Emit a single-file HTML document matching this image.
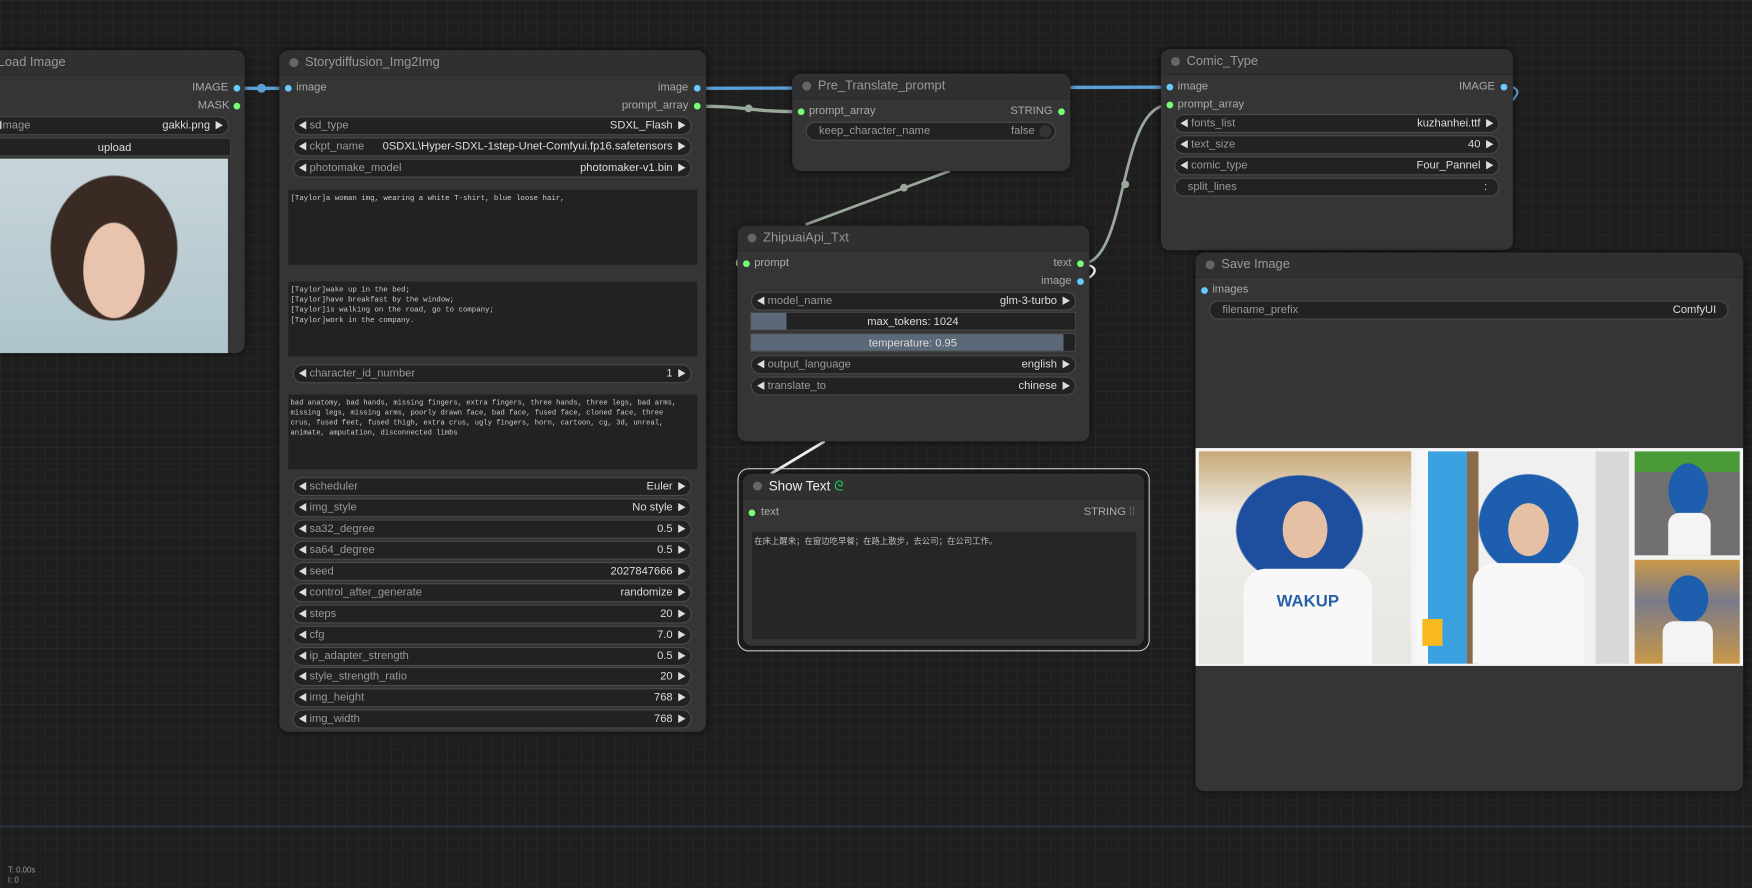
<!DOCTYPE html>
<html><head><meta charset="utf-8"><style>
html,body{margin:0;padding:0;width:1752px;height:888px;overflow:hidden;background:#1e1e1e}
#c{position:absolute;left:0;top:0;width:1568px;height:795px;transform:scale(1.11735);transform-origin:0 0;overflow:hidden;
background-color:#1e1e1e;
background-image:linear-gradient(#262626 1px,transparent 1px),linear-gradient(90deg,#262626 1px,transparent 1px);
background-size:10px 10px;font-family:"Liberation Sans","Noto Sans CJK SC",sans-serif;font-size:10px;color:#aaa}
.n{position:absolute;background:#353535;border-radius:8px;box-shadow:0 0 6px rgba(0,0,0,.6)}
.t{position:absolute;left:0;right:0;top:0;height:22px;background:#303030;border-radius:8px 8px 0 0;border-bottom:1px solid #2a2a2a;color:#999;font-size:11.5px;line-height:22px;padding-left:23px}
.t:before{content:"";position:absolute;left:9px;top:7px;width:8px;height:8px;border-radius:50%;background:#666}
.t.nd:before{display:none}
.a{position:absolute;font-size:10px;color:#aaa;line-height:12px}
.d{position:absolute;width:6px;height:6px;border-radius:50%}
.g{background:#7f7}.b{background:#6cf}
.w{position:absolute;height:15px;border-radius:9px;background:#222;border:1px solid #4a4a4a;line-height:15px;font-size:10px;color:#999}
.w .l{position:absolute;left:14px}.w .v{position:absolute;right:16px;color:#ddd}
.w:before{content:"◀";position:absolute;left:4px;font-size:8px;color:#ddd}
.w:after{content:"▶";position:absolute;right:4px;font-size:8px;color:#ddd}
.w.nb:before,.w.nb:after{content:""}
.w.nb .l{left:11px}.w.nb .v{right:10px}
.ta{position:absolute;background:#222;font-family:"Liberation Mono",monospace;font-size:6.6px;line-height:9px;color:#ccc;padding:3px 2px;box-sizing:border-box;white-space:pre;overflow:hidden}
.s{position:absolute;height:17px;background:#222;border:1px solid #444;color:#ddd;text-align:center;line-height:17px;font-size:10px;box-sizing:border-box}
</style></head><body><div id="c">
<div style="position:absolute;left:0;right:0;top:739px;height:1px;background:#2a3a4a"></div>
<svg style="position:absolute;left:0;top:0" width="1568" height="795">
<g fill="none" stroke-width="3">
<path d="M212 79 L258 79" stroke="#5a9fd8"/>
<path d="M624 79 L1046 78" stroke="#5a9fd8"/>
<path d="M624 95 C670 95 670 100 717 100" stroke="#99a89a"/>
<path d="M721 201 L850 153" stroke="#99a89a" stroke-width="2.5"/>
<path d="M968 236 C1010 236 1000 94 1046 94" stroke="#99a89a" stroke-width="2.5"/>
<path d="M738 395 L690 424" stroke="#eee" stroke-width="2.5"/>
<path d="M968 236 C985 238 982 246 968 252" stroke="#fff" stroke-width="2"/>
<path d="M1354 78 C1362 82 1356 86 1354 90" stroke="#5a9fd8" stroke-width="2"/>
<path d="M664 230 C658 233 658 238 664 240" stroke="#ccc" stroke-width="2"/>
</g>
<circle cx="234" cy="79" r="4" fill="#5a9fd8"/>
<circle cx="670" cy="97" r="3.5" fill="#99a89a"/>
<circle cx="809" cy="168" r="3.5" fill="#99a89a"/>
<circle cx="1007" cy="165" r="3.5" fill="#99a89a"/>
</svg>

<!-- Load Image -->
<div class="n" style="left:-12px;top:45px;width:231px;height:271px">
<div class="t nd"><span style="position:absolute;left:10px">Load Image</span></div>
</div>
<div class="a" style="left:172px;top:73px;color:#aaa">IMAGE</div><div class="d b" style="left:209px;top:76px"></div>
<div class="a" style="left:177px;top:89px">MASK</div><div class="d g" style="left:209px;top:92px"></div>
<div class="w" style="left:-10px;top:104px;width:214px;border-left:none"><span class="l" style="left:10px">image</span><span class="v">gakki.png</span></div>
<div class="s" style="left:-2px;top:123px;width:209px;background:#222">upload</div>
<div style="position:absolute;left:0;top:142px;width:204px;height:174px;background:radial-gradient(ellipse 45px 70px at 102px 100px,#e8c4ae 60%,transparent 62%),radial-gradient(ellipse 70px 80px at 102px 80px,#3a2a24 80%,transparent 82%),linear-gradient(#c8d6da,#aec4cc)"></div>

<!-- Storydiffusion -->
<div class="n" style="left:250px;top:45px;width:382px;height:610px">
<div class="t">Storydiffusion_Img2Img</div>
<div class="d b" style="left:5px;top:31px"></div><div class="a" style="left:15px;top:28px">image</div>
<div class="a" style="right:16px;top:28px">image</div><div class="d b" style="right:5px;top:31px"></div>
<div class="a" style="right:16px;top:44px">prompt_array</div><div class="d g" style="right:5px;top:47px"></div>
<div class="w" style="left:12px;top:59px;width:355px"><span class="l">sd_type</span><span class="v">SDXL_Flash</span></div>
<div class="w" style="left:12px;top:78px;width:355px"><span class="l">ckpt_name</span><span class="v">0SDXL\Hyper-SDXL-1step-Unet-Comfyui.fp16.safetensors</span></div>
<div class="w" style="left:12px;top:97px;width:355px"><span class="l">photomake_model</span><span class="v">photomaker-v1.bin</span></div>
<div class="ta" style="left:8px;top:125px;width:366px;height:67px">[Taylor]a woman img, wearing a white T-shirt, blue loose hair,</div>
<div class="ta" style="left:8px;top:207px;width:366px;height:67px">[Taylor]wake up in the bed;
[Taylor]have breakfast by the window;
[Taylor]is walking on the road, go to company;
[Taylor]work in the company.</div>
<div class="w" style="left:12px;top:281px;width:355px"><span class="l">character_id_number</span><span class="v">1</span></div>
<div class="ta" style="left:8px;top:308px;width:366px;height:67px;font-size:6.4px">bad anatomy, bad hands, missing fingers, extra fingers, three hands, three legs, bad arms,
missing legs, missing arms, poorly drawn face, bad face, fused face, cloned face, three
crus, fused feet, fused thigh, extra crus, ugly fingers, horn, cartoon, cg, 3d, unreal,
animate, amputation, disconnected limbs</div>
<div class="w" style="left:12px;top:382px;width:355px"><span class="l">scheduler</span><span class="v">Euler</span></div>
<div class="w" style="left:12px;top:401px;width:355px"><span class="l">img_style</span><span class="v">No style</span></div>
<div class="w" style="left:12px;top:420px;width:355px"><span class="l">sa32_degree</span><span class="v">0.5</span></div>
<div class="w" style="left:12px;top:439px;width:355px"><span class="l">sa64_degree</span><span class="v">0.5</span></div>
<div class="w" style="left:12px;top:458px;width:355px"><span class="l">seed</span><span class="v">2027847666</span></div>
<div class="w" style="left:12px;top:477px;width:355px"><span class="l">control_after_generate</span><span class="v">randomize</span></div>
<div class="w" style="left:12px;top:496px;width:355px"><span class="l">steps</span><span class="v">20</span></div>
<div class="w" style="left:12px;top:515px;width:355px"><span class="l">cfg</span><span class="v">7.0</span></div>
<div class="w" style="left:12px;top:534px;width:355px"><span class="l">ip_adapter_strength</span><span class="v">0.5</span></div>
<div class="w" style="left:12px;top:552px;width:355px"><span class="l">style_strength_ratio</span><span class="v">20</span></div>
<div class="w" style="left:12px;top:571px;width:355px"><span class="l">img_height</span><span class="v">768</span></div>
<div class="w" style="left:12px;top:590px;width:355px"><span class="l">img_width</span><span class="v">768</span></div>
</div>

<!-- Pre_Translate -->
<div class="n" style="left:709px;top:66px;width:249px;height:87px">
<div class="t">Pre_Translate_prompt</div>
<div class="d g" style="left:5px;top:31px"></div><div class="a" style="left:15px;top:28px">prompt_array</div>
<div class="a" style="right:16px;top:28px">STRING</div><div class="d g" style="right:5px;top:31px"></div>
<div class="w nb" style="left:12px;top:43px;width:222px"><span class="l">keep_character_name</span><span class="v" style="right:18px;color:#999">false</span><span style="position:absolute;right:3px;top:2px;width:11px;height:11px;border-radius:50%;background:#333"></span></div>
</div>

<!-- Comic_Type -->
<div class="n" style="left:1039px;top:44px;width:315px;height:180px">
<div class="t">Comic_Type</div>
<div class="d b" style="left:5px;top:31px"></div><div class="a" style="left:15px;top:28px">image</div>
<div class="a" style="right:16px;top:28px">IMAGE</div><div class="d b" style="right:5px;top:31px"></div>
<div class="d g" style="left:5px;top:47px"></div><div class="a" style="left:15px;top:44px">prompt_array</div>
<div class="w" style="left:12px;top:58px;width:289px"><span class="l">fonts_list</span><span class="v">kuzhanhei.ttf</span></div>
<div class="w" style="left:12px;top:77px;width:289px"><span class="l">text_size</span><span class="v">40</span></div>
<div class="w" style="left:12px;top:96px;width:289px"><span class="l">comic_type</span><span class="v">Four_Pannel</span></div>
<div class="w nb" style="left:12px;top:115px;width:289px"><span class="l">split_lines</span><span class="v">:</span></div>
</div>

<!-- Zhipuai -->
<div class="n" style="left:660px;top:202px;width:315px;height:193px">
<div class="t">ZhipuaiApi_Txt</div>
<div class="d g" style="left:5px;top:31px"></div><div class="a" style="left:15px;top:28px">prompt</div>
<div class="a" style="right:16px;top:28px">text</div><div class="d g" style="right:5px;top:31px"></div>
<div class="a" style="right:16px;top:44px">image</div><div class="d b" style="right:5px;top:47px"></div>
<div class="w" style="left:12px;top:59px;width:289px"><span class="l">model_name</span><span class="v">glm-3-turbo</span></div>
<div class="s" style="left:11px;top:77px;width:292px;background:linear-gradient(90deg,#5a6878 32px,#222 32px)">max_tokens: 1024</div>
<div class="s" style="left:11px;top:96px;width:292px;background:linear-gradient(90deg,#5a6878 280px,#222 280px)">temperature: 0.95</div>
<div class="w" style="left:12px;top:116px;width:289px"><span class="l">output_language</span><span class="v">english</span></div>
<div class="w" style="left:12px;top:135px;width:289px"><span class="l">translate_to</span><span class="v">chinese</span></div>
</div>

<!-- Show Text -->
<div style="position:absolute;left:660px;top:419px;width:367px;height:162px;border:1.5px solid #ccc;border-radius:10px"></div>
<div class="n" style="left:665px;top:424px;width:359px;height:154px">
<div class="t" style="color:#eee;font-size:12px">Show Text <span style="color:#2c6">ᘓ</span></div>
<div class="d g" style="left:5px;top:32px"></div><div class="a" style="left:16px;top:29px">text</div>
<div class="a" style="right:8px;top:29px">STRING <span style="color:#777">⁞⁞</span></div>
<div style="position:absolute;left:8px;top:52px;width:344px;height:96px;background:#262626;color:#bbb;font-size:7.5px;padding:3px 2px;box-sizing:border-box">在床上醒来；在窗边吃早餐；在路上散步，去公司；在公司工作。</div>
</div>

<!-- Save Image -->
<div class="n" style="left:1070px;top:226px;width:490px;height:482px">
<div class="t">Save Image</div>
<div class="d b" style="left:5px;top:31px"></div><div class="a" style="left:15px;top:28px">images</div>
<div class="w nb" style="left:12px;top:43px;width:463px"><span class="l">filename_prefix</span><span class="v">ComfyUI</span></div>
<div style="position:absolute;left:0;top:175px;width:490px;height:195px;background:#f4f4f4">
<div style="position:absolute;left:3px;top:3px;width:190px;height:190px;background:radial-gradient(ellipse 22px 28px at 95px 70px,#e6c0a4 90%,transparent 92%),radial-gradient(ellipse 70px 60px at 90px 70px,#1e4e9e 80%,transparent 82%),linear-gradient(#c8a878 0,#f0eee8 30%,#e8e6e2)"><div style="position:absolute;left:40px;top:105px;width:115px;height:85px;background:#f8f8f8;border-radius:20px 20px 0 0;color:#2860a8;font-weight:bold;font-size:15px;text-align:center;line-height:60px">WAKUP</div></div>
<div style="position:absolute;left:198px;top:3px;width:190px;height:190px;background:radial-gradient(ellipse 20px 26px at 100px 70px,#e6c0a4 90%,transparent 92%),radial-gradient(ellipse 55px 55px at 100px 65px,#1e5eae 80%,transparent 82%),linear-gradient(90deg,#f8f8f8 0,#f8f8f8 10px,#3aa0e0 10px,#3aa0e0 45px,#8a6a48 45px,#8a6a48 55px,#f0f0f0 55px,#f0f0f0 160px,#d8d8d8 160px)"><div style="position:absolute;left:50px;top:100px;width:100px;height:90px;background:#f8f8f8;border-radius:20px 20px 0 0"></div><div style="position:absolute;left:5px;top:150px;width:18px;height:24px;background:#f8b820"></div></div>
<div style="position:absolute;left:393px;top:3px;width:94px;height:93px;background:radial-gradient(ellipse 22px 30px at 48px 35px,#1e5eae 80%,transparent 82%),linear-gradient(#4a9a38 0,#4a9a38 20%,#707070 20%)"><div style="position:absolute;left:30px;top:55px;width:38px;height:38px;background:#f4f4f4;border-radius:10px 10px 0 0"></div></div>
<div style="position:absolute;left:393px;top:100px;width:94px;height:93px;background:radial-gradient(ellipse 22px 26px at 48px 35px,#1e5eae 80%,transparent 82%),linear-gradient(#c89848,#7a7a8a 40%,#c89848)"><div style="position:absolute;left:25px;top:55px;width:45px;height:38px;background:#f4f4f4;border-radius:10px 10px 0 0"></div></div>
</div>
</div>

<div style="position:absolute;left:7px;top:775px;font-size:7px;color:#999;line-height:9px">T: 0.00s<br>I: 0</div>
</div></body></html>
